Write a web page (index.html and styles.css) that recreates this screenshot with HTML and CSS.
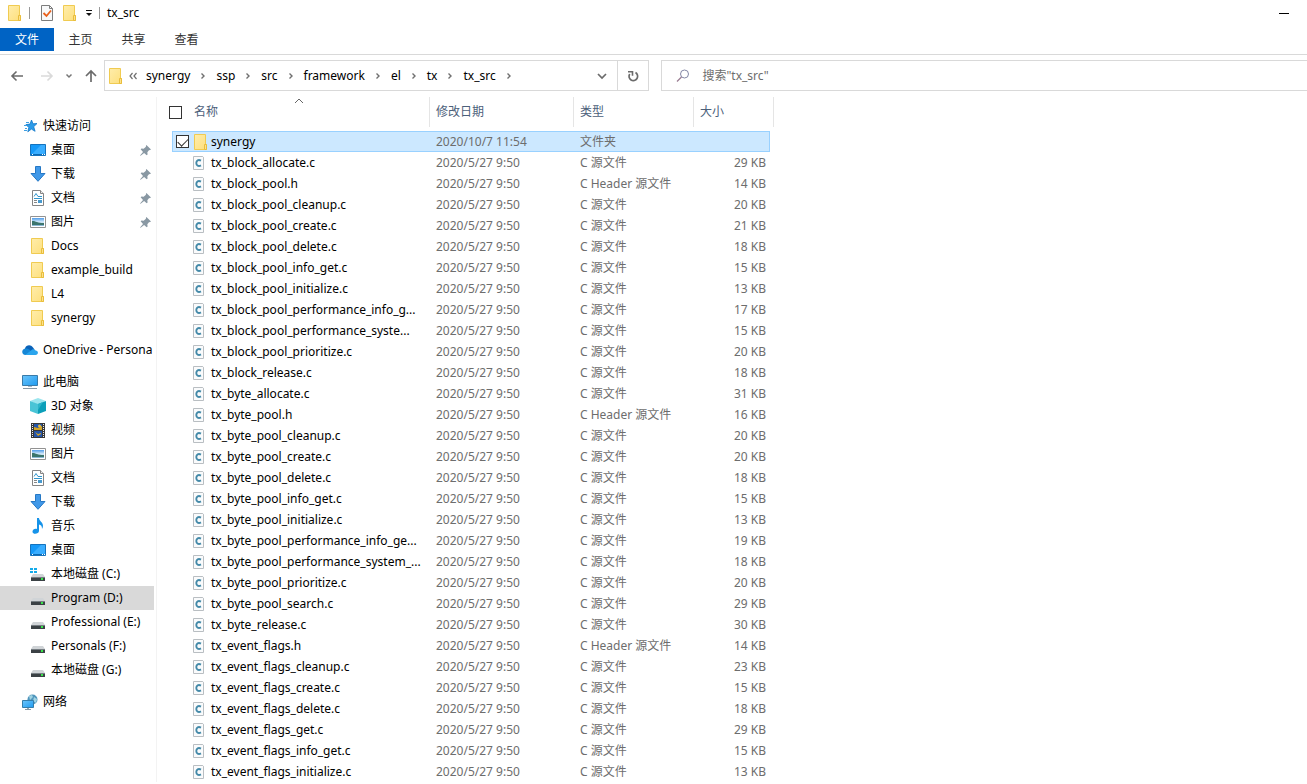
FILE: index.html
```
<!DOCTYPE html>
<html lang="zh-CN">
<head>
  <meta charset="utf-8">
  <title>tx_src</title>
  <link rel="stylesheet" href="styles.css">
</head>
<body>
  <!-- Icon definitions -->
  <svg class="defs" aria-hidden="true">
    <defs>
      <linearGradient id="g-screen" x1="0" y1="0" x2="1" y2="1">
        <stop offset="0" stop-color="#6cc5fb"/><stop offset="1" stop-color="#1f9bf0"/>
      </linearGradient>
      <linearGradient id="g-folder" x1="0" y1="0" x2="1" y2="1">
        <stop offset="0" stop-color="#ffedab"/><stop offset="1" stop-color="#fddf7c"/>
      </linearGradient>
      <linearGradient id="g-photo" x1="0" y1="0" x2="0" y2="1">
        <stop offset="0" stop-color="#4f9be8"/><stop offset=".5" stop-color="#d8ecfa"/><stop offset="1" stop-color="#7fb0cf"/>
      </linearGradient>
    </defs>
    <symbol id="folder" viewBox="0 0 16 16">
      <path d="M1.5.5h11v10h1v5h-12z" fill="url(#g-folder)" stroke="#f0cb51"/>
      <path d="M11.5 15.5v-5h2v5z" fill="#fde28a" stroke="#e9bd3c"/>
    </symbol>
    <symbol id="file-c" viewBox="0 0 16 16">
      <path d="M.5 1.500h10v13H.5z" fill="#fafbfc" stroke="#b9bec2"/>
      <path d="M9.500 1h1.500v1.500z" fill="#fff"/>
      <path d="M8 5.600C5.400 4.100 3.300 5.500 3.300 8s2.100 3.900 4.700 2.400" fill="none" stroke="#4389a8" stroke-width="1.900"/>
    </symbol>
    <symbol id="star" viewBox="0 0 16 16">
      <path d="M9.500 2l1.500 3.800 4-.3-3.300 3.200 1.400 4.600-3.700-2.200-3.600 2.700 1-4.300L4 6.600l4-.5z" fill="#2c9be8" stroke="#1177c9" stroke-width=".8"/>
      <path d="M4 4.500h3M2 7.500h3M3 10.500h2M2 12.500h3" stroke="#3d9fe3"/>
    </symbol>
    <symbol id="desktop" viewBox="0 0 16 16">
      <path d="M.5 2.500h15v11H.5z" fill="#1599f8" stroke="#1573bd"/>
      <path d="M2 12l9-9h4v9z" fill="#39adff"/>
      <path d="M1 12.500h14" stroke="#0a6bb5"/><path d="M2 12.500h1M12 12.500h1M14 12.500h1" stroke="#fff"/>
    </symbol>
    <symbol id="download" viewBox="0 0 16 16">
      <path d="M5.500.5h5v7h4.500L8 15.300 1 7.500h4.500z" fill="#4098e8" stroke="#2678c5"/>
    </symbol>
    <symbol id="document" viewBox="0 0 16 16">
      <path d="M2.500.5h8l3 3v12h-11z" fill="#fff" stroke="#858585"/>
      <path d="M10.500.5v3h3" fill="#eee" stroke="#858585"/>
      <path d="M4 6.500l2-3 2 3M8 6.500h4M4 8.500h8" fill="none" stroke="#3295cc"/>
      <path d="M4 10.500h3M4 12.500h3" stroke="#888"/><path d="M8 10h4v3H8z" fill="#479acf"/>
    </symbol>
    <symbol id="picture" viewBox="0 0 16 16">
      <path d="M.5 2.500h15v11H.5z" fill="#fff" stroke="#929292"/>
      <path d="M2 4h12v8H2z" fill="url(#g-photo)"/>
      <path d="M2 7c3-.5 5 2 12 2v2H2z" fill="#3c756d"/>
    </symbol>
    <symbol id="onedrive" viewBox="0 0 16 16">
      <path d="M3 6.500C4 3 8.500 2 11 5.500l1.500 2L9 11H2z" fill="#0a62b9"/>
      <path d="M3.500 13C-.8 13-.8 7 3.200 6.500c2-.3 3.300.5 4.800 1.500l3 4z" fill="#1687d6"/>
      <path d="M3 13l6-4.500c2-2.500 4.500-1 4.500 0C17 9 16.500 13 13.500 13z" fill="#2ba5ed"/>
    </symbol>
    <symbol id="pc" viewBox="0 0 16 16">
      <path d="M.5 1.500h15v10H.5z" fill="url(#g-screen)" stroke="#397ba9"/>
      <path d="M6 12h4v1H6z" fill="#a9b9c5"/><path d="M1 14.500h14" stroke="#8798a5"/>
    </symbol>
    <symbol id="cube" viewBox="0 0 16 16">
      <path d="M0 3l8-3 8 3-8 4z" fill="#9be5ee"/>
      <path d="M0 3l8 3v10l-8-3z" fill="#49c4d6"/>
      <path d="M16 3L8 6v10l8-3z" fill="#0b9fb9"/>
      <path d="M8 6l5-2-5 8z" fill="#2bb4ca"/>
    </symbol>
    <symbol id="video" viewBox="0 0 16 16">
      <path d="M1 1h14v15H1z" fill="#383838"/>
      <path d="M2.500 2v14M13.500 2v14" stroke="#eee" stroke-dasharray="1 1"/>
      <path d="M4 2h8v6H4zM4 9h8v6H4z" fill="#2455a9"/>
      <path d="M4 5l4 1 4-2v4H4zM5 10l3 2 3-1v1l-3 2z" fill="#d4a526"/>
      <circle cx="9.500" cy="4" r="1.500" fill="#e8be3b"/>
    </symbol>
    <symbol id="music" viewBox="0 0 16 16">
      <path d="M7 0h2c0 3 4 4 4 8 0 1-.4 2-1 3 0-3-1-4-3-4.500V13c0 3-6 4-6.500 1-.3-2.500 2.500-4 4.500-3z" fill="#1693e9"/>
    </symbol>
    <symbol id="drive" viewBox="0 0 16 16">
      <path d="M3 8h10l2 3H1z" fill="#d0d4d7"/>
      <path d="M1 11h14v4H1z" fill="#3b4145"/><path d="M1 11.500h14" stroke="#767d82"/>
      <path d="M11 13h2" stroke="#37e449" stroke-width="2"/>
    </symbol>
    <symbol id="drive-c" viewBox="0 0 16 16">
      <path d="M3 8h10l2 3H1z" fill="#d0d4d7"/>
      <path d="M1 11h14v4H1z" fill="#3b4145"/><path d="M1 11.500h14" stroke="#767d82"/>
      <path d="M11 13h2" stroke="#37e449" stroke-width="2"/>
      <path d="M0 2h3v2H0zM4 2h3v2H4zM0 5h3v2H0zM4 5h3v2H4z" fill="#13abea"/>
    </symbol>
    <symbol id="network" viewBox="0 0 16 16">
      <circle cx="10.500" cy="5.500" r="5" fill="#5096bd"/>
      <path d="M7 2l3-1 1 2-3 3zM12 3l3 2-1 4-3-2z" fill="#a0d3e2"/>
      <path d="M.5 6.500h11v7H.5z" fill="url(#g-screen)" stroke="#347eac"/>
      <path d="M5 14h2v1H5z" fill="#98a9b4"/><path d="M3 15.500h6" stroke="#8798a5"/>
    </symbol>
    <symbol id="pin" viewBox="0 0 12 12">
      <path d="M7 0l5 5-1.500.6L10 5.500 8 8l.3 2.300-1 1L4.500 8.700 1 11.500 0 12l.5-1L3.300 7.500.7 4.700l1-1L4 4l2.500-2L6.400 1z" fill="#8998a3"/>
    </symbol>
    <symbol id="chevron" viewBox="0 0 8 8">
      <path d="M2.500 1.500L5 4 2.500 6.500" fill="none" stroke="#6f6f6f" stroke-width="1.400"/>
    </symbol>
  </svg>

  <header class="title-bar">
    <svg class="icon"><use href="#folder"/></svg>
    <span class="divider"></span>
    <button class="quick-button properties" aria-label="属性">
      <svg class="icon" viewBox="0 0 16 16">
        <path d="M2.500.5h8l3 3v12h-11z" fill="#f8f9fa" stroke="#7d7d7d"/>
        <path d="M10.500.5v3h3" fill="none" stroke="#7d7d7d"/>
        <path d="M4.500 8l3 3 4.500-5.500" fill="none" stroke="#e9601b" stroke-width="1.800"/>
      </svg>
    </button>
    <button class="quick-button" aria-label="新建文件夹"><svg class="icon"><use href="#folder"/></svg></button>
    <button class="quick-button customize" aria-label="自定义快速访问工具栏">
      <svg width="8" height="8" viewBox="0 0 8 8"><path d="M1 1.500h6" stroke="#111"/><path d="M1 4h6L4 7z" fill="#111"/></svg>
    </button>
    <span class="divider"></span>
    <span class="title">tx_src</span>
    <button class="minimize" aria-label="最小化"></button>
  </header>

  <nav class="tabs">
    <button class="tab active">文件</button>
    <button class="tab">主页</button>
    <button class="tab">共享</button>
    <button class="tab">查看</button>
  </nav>

  <div class="toolbar">
    <div class="nav-buttons">
      <button aria-label="后退"><svg width="14" height="14" viewBox="0 0 14 14"><path d="M13 7H2M6.500 2.500L2 7l4.500 4.500" fill="none" stroke="#6b6b6b" stroke-width="1.600"/></svg></button>
      <button aria-label="前进"><svg width="14" height="14" viewBox="0 0 14 14"><path d="M1 7h11M7.500 2.500L12 7l-4.500 4.500" fill="none" stroke="#dadada" stroke-width="1.600"/></svg></button>
      <button class="recent" aria-label="最近位置"><svg width="8" height="8" viewBox="0 0 8 8"><path d="M1.500 2.500L4 5l2.500-2.500" fill="none" stroke="#777" stroke-width="1.500"/></svg></button>
      <button aria-label="上移"><svg width="14" height="14" viewBox="0 0 14 14"><path d="M7 13V2M2 7l5-5 5 5" fill="none" stroke="#6b6b6b" stroke-width="1.700"/></svg></button>
    </div>
    <div class="address">
      <svg class="icon"><use href="#folder"/></svg>
      <svg class="overflow" width="10" height="8" viewBox="0 0 10 8"><path d="M4.500 1L2 4l2.500 3M8.500 1L6 4l2.500 3" fill="none" stroke="#6f6f6f" stroke-width="1.200"/></svg>
      <a href="#">synergy</a><svg class="sep"><use href="#chevron"/></svg>
      <a href="#">ssp</a><svg class="sep"><use href="#chevron"/></svg>
      <a href="#">src</a><svg class="sep"><use href="#chevron"/></svg>
      <a href="#">framework</a><svg class="sep"><use href="#chevron"/></svg>
      <a href="#">el</a><svg class="sep"><use href="#chevron"/></svg>
      <a href="#">tx</a><svg class="sep"><use href="#chevron"/></svg>
      <a href="#">tx_src</a><svg class="sep"><use href="#chevron"/></svg>
      <button class="history" aria-label="以前的位置"><svg width="12" height="12" viewBox="0 0 12 12"><path d="M2 4l4 4 4-4" fill="none" stroke="#6b6b6b" stroke-width="1.700"/></svg></button>
      <button class="refresh" aria-label="刷新"><svg width="12" height="12" viewBox="0 0 12 12"><path d="M8.500 2.600A4.300 4.300 0 1 1 2.700 4" fill="none" stroke="#6b6b6b" stroke-width="1.700"/><path d="M1 1.800h4.500v4" fill="none" stroke="#6b6b6b" stroke-width="1.600"/></svg></button>
    </div>
    <div class="search">
      <svg width="14" height="14" viewBox="0 0 14 14"><circle cx="8.500" cy="5" r="4" fill="none" stroke="#8387a6"/><path d="M5.500 8L1 12.500" stroke="#9a7c92" stroke-width="1.200"/></svg>
      <input type="text" aria-label="搜索" placeholder='搜索"tx_src"'>
    </div>
  </div>

  <div class="content">
    <nav class="sidebar">
      <div class="group">
        <a class="root" href="#"><svg class="icon"><use href="#star"/></svg>快速访问</a>
        <a href="#"><svg class="icon"><use href="#desktop"/></svg>桌面<svg class="pin"><use href="#pin"/></svg></a>
        <a href="#"><svg class="icon"><use href="#download"/></svg>下载<svg class="pin"><use href="#pin"/></svg></a>
        <a href="#"><svg class="icon"><use href="#document"/></svg>文档<svg class="pin"><use href="#pin"/></svg></a>
        <a href="#"><svg class="icon"><use href="#picture"/></svg>图片<svg class="pin"><use href="#pin"/></svg></a>
        <a href="#"><svg class="icon"><use href="#folder"/></svg>Docs</a>
        <a href="#"><svg class="icon"><use href="#folder"/></svg>example_build</a>
        <a href="#"><svg class="icon"><use href="#folder"/></svg>L4</a>
        <a href="#"><svg class="icon"><use href="#folder"/></svg>synergy</a>
      </div>
      <div class="group">
        <a class="root" href="#"><svg class="icon"><use href="#onedrive"/></svg>OneDrive - Persona</a>
      </div>
      <div class="group">
        <a class="root" href="#"><svg class="icon"><use href="#pc"/></svg>此电脑</a>
        <a href="#"><svg class="icon"><use href="#cube"/></svg>3D 对象</a>
        <a href="#"><svg class="icon"><use href="#video"/></svg>视频</a>
        <a href="#"><svg class="icon"><use href="#picture"/></svg>图片</a>
        <a href="#"><svg class="icon"><use href="#document"/></svg>文档</a>
        <a href="#"><svg class="icon"><use href="#download"/></svg>下载</a>
        <a href="#"><svg class="icon"><use href="#music"/></svg>音乐</a>
        <a href="#"><svg class="icon"><use href="#desktop"/></svg>桌面</a>
        <a href="#"><svg class="icon"><use href="#drive-c"/></svg>本地磁盘 (C:)</a>
        <a class="current" href="#"><svg class="icon"><use href="#drive"/></svg>Program (D:)</a>
        <a href="#"><svg class="icon"><use href="#drive"/></svg>Professional (E:)</a>
        <a href="#"><svg class="icon"><use href="#drive"/></svg>Personals (F:)</a>
        <a href="#"><svg class="icon"><use href="#drive"/></svg>本地磁盘 (G:)</a>
      </div>
      <div class="group">
        <a class="root" href="#"><svg class="icon"><use href="#network"/></svg>网络</a>
      </div>
    </nav>

    <main>
      <table class="files">
        <colgroup>
          <col class="col-gutter"><col class="col-check"><col class="col-name"><col class="col-date"><col class="col-type"><col class="col-size"><col class="col-end">
        </colgroup>
        <thead>
          <tr>
            <th colspan="3" class="head-name">
              <svg class="sort" width="10" height="6" viewBox="0 0 10 6"><path d="M1 5l4-4 4 4" fill="none" stroke="#666"/></svg>
              <div class="cell"><input type="checkbox" aria-label="全选">名称</div>
            </th>
            <th>修改日期</th>
            <th>类型</th>
            <th colspan="2">大小</th>
          </tr>
        </thead>
        <tbody>
          <tr class="selected"><td></td><td class="check"><input type="checkbox" aria-label="synergy" checked></td><td class="name"><div class="cell"><svg class="icon"><use href="#folder"/></svg>synergy</div></td><td>2020/10/7 11:54</td><td>文件夹</td><td class="size"></td><td></td></tr>
          <tr><td></td><td></td><td class="name"><div class="cell"><svg class="icon"><use href="#file-c"/></svg>tx_block_allocate.c</div></td><td>2020/5/27 9:50</td><td>C 源文件</td><td class="size">29 KB</td><td></td></tr>
          <tr><td></td><td></td><td class="name"><div class="cell"><svg class="icon"><use href="#file-c"/></svg>tx_block_pool.h</div></td><td>2020/5/27 9:50</td><td>C Header 源文件</td><td class="size">14 KB</td><td></td></tr>
          <tr><td></td><td></td><td class="name"><div class="cell"><svg class="icon"><use href="#file-c"/></svg>tx_block_pool_cleanup.c</div></td><td>2020/5/27 9:50</td><td>C 源文件</td><td class="size">20 KB</td><td></td></tr>
          <tr><td></td><td></td><td class="name"><div class="cell"><svg class="icon"><use href="#file-c"/></svg>tx_block_pool_create.c</div></td><td>2020/5/27 9:50</td><td>C 源文件</td><td class="size">21 KB</td><td></td></tr>
          <tr><td></td><td></td><td class="name"><div class="cell"><svg class="icon"><use href="#file-c"/></svg>tx_block_pool_delete.c</div></td><td>2020/5/27 9:50</td><td>C 源文件</td><td class="size">18 KB</td><td></td></tr>
          <tr><td></td><td></td><td class="name"><div class="cell"><svg class="icon"><use href="#file-c"/></svg>tx_block_pool_info_get.c</div></td><td>2020/5/27 9:50</td><td>C 源文件</td><td class="size">15 KB</td><td></td></tr>
          <tr><td></td><td></td><td class="name"><div class="cell"><svg class="icon"><use href="#file-c"/></svg>tx_block_pool_initialize.c</div></td><td>2020/5/27 9:50</td><td>C 源文件</td><td class="size">13 KB</td><td></td></tr>
          <tr><td></td><td></td><td class="name"><div class="cell"><svg class="icon"><use href="#file-c"/></svg>tx_block_pool_performance_info_g...</div></td><td>2020/5/27 9:50</td><td>C 源文件</td><td class="size">17 KB</td><td></td></tr>
          <tr><td></td><td></td><td class="name"><div class="cell"><svg class="icon"><use href="#file-c"/></svg>tx_block_pool_performance_syste...</div></td><td>2020/5/27 9:50</td><td>C 源文件</td><td class="size">15 KB</td><td></td></tr>
          <tr><td></td><td></td><td class="name"><div class="cell"><svg class="icon"><use href="#file-c"/></svg>tx_block_pool_prioritize.c</div></td><td>2020/5/27 9:50</td><td>C 源文件</td><td class="size">20 KB</td><td></td></tr>
          <tr><td></td><td></td><td class="name"><div class="cell"><svg class="icon"><use href="#file-c"/></svg>tx_block_release.c</div></td><td>2020/5/27 9:50</td><td>C 源文件</td><td class="size">18 KB</td><td></td></tr>
          <tr><td></td><td></td><td class="name"><div class="cell"><svg class="icon"><use href="#file-c"/></svg>tx_byte_allocate.c</div></td><td>2020/5/27 9:50</td><td>C 源文件</td><td class="size">31 KB</td><td></td></tr>
          <tr><td></td><td></td><td class="name"><div class="cell"><svg class="icon"><use href="#file-c"/></svg>tx_byte_pool.h</div></td><td>2020/5/27 9:50</td><td>C Header 源文件</td><td class="size">16 KB</td><td></td></tr>
          <tr><td></td><td></td><td class="name"><div class="cell"><svg class="icon"><use href="#file-c"/></svg>tx_byte_pool_cleanup.c</div></td><td>2020/5/27 9:50</td><td>C 源文件</td><td class="size">20 KB</td><td></td></tr>
          <tr><td></td><td></td><td class="name"><div class="cell"><svg class="icon"><use href="#file-c"/></svg>tx_byte_pool_create.c</div></td><td>2020/5/27 9:50</td><td>C 源文件</td><td class="size">20 KB</td><td></td></tr>
          <tr><td></td><td></td><td class="name"><div class="cell"><svg class="icon"><use href="#file-c"/></svg>tx_byte_pool_delete.c</div></td><td>2020/5/27 9:50</td><td>C 源文件</td><td class="size">18 KB</td><td></td></tr>
          <tr><td></td><td></td><td class="name"><div class="cell"><svg class="icon"><use href="#file-c"/></svg>tx_byte_pool_info_get.c</div></td><td>2020/5/27 9:50</td><td>C 源文件</td><td class="size">15 KB</td><td></td></tr>
          <tr><td></td><td></td><td class="name"><div class="cell"><svg class="icon"><use href="#file-c"/></svg>tx_byte_pool_initialize.c</div></td><td>2020/5/27 9:50</td><td>C 源文件</td><td class="size">13 KB</td><td></td></tr>
          <tr><td></td><td></td><td class="name"><div class="cell"><svg class="icon"><use href="#file-c"/></svg>tx_byte_pool_performance_info_ge...</div></td><td>2020/5/27 9:50</td><td>C 源文件</td><td class="size">19 KB</td><td></td></tr>
          <tr><td></td><td></td><td class="name"><div class="cell"><svg class="icon"><use href="#file-c"/></svg>tx_byte_pool_performance_system_...</div></td><td>2020/5/27 9:50</td><td>C 源文件</td><td class="size">18 KB</td><td></td></tr>
          <tr><td></td><td></td><td class="name"><div class="cell"><svg class="icon"><use href="#file-c"/></svg>tx_byte_pool_prioritize.c</div></td><td>2020/5/27 9:50</td><td>C 源文件</td><td class="size">20 KB</td><td></td></tr>
          <tr><td></td><td></td><td class="name"><div class="cell"><svg class="icon"><use href="#file-c"/></svg>tx_byte_pool_search.c</div></td><td>2020/5/27 9:50</td><td>C 源文件</td><td class="size">29 KB</td><td></td></tr>
          <tr><td></td><td></td><td class="name"><div class="cell"><svg class="icon"><use href="#file-c"/></svg>tx_byte_release.c</div></td><td>2020/5/27 9:50</td><td>C 源文件</td><td class="size">30 KB</td><td></td></tr>
          <tr><td></td><td></td><td class="name"><div class="cell"><svg class="icon"><use href="#file-c"/></svg>tx_event_flags.h</div></td><td>2020/5/27 9:50</td><td>C Header 源文件</td><td class="size">14 KB</td><td></td></tr>
          <tr><td></td><td></td><td class="name"><div class="cell"><svg class="icon"><use href="#file-c"/></svg>tx_event_flags_cleanup.c</div></td><td>2020/5/27 9:50</td><td>C 源文件</td><td class="size">23 KB</td><td></td></tr>
          <tr><td></td><td></td><td class="name"><div class="cell"><svg class="icon"><use href="#file-c"/></svg>tx_event_flags_create.c</div></td><td>2020/5/27 9:50</td><td>C 源文件</td><td class="size">15 KB</td><td></td></tr>
          <tr><td></td><td></td><td class="name"><div class="cell"><svg class="icon"><use href="#file-c"/></svg>tx_event_flags_delete.c</div></td><td>2020/5/27 9:50</td><td>C 源文件</td><td class="size">18 KB</td><td></td></tr>
          <tr><td></td><td></td><td class="name"><div class="cell"><svg class="icon"><use href="#file-c"/></svg>tx_event_flags_get.c</div></td><td>2020/5/27 9:50</td><td>C 源文件</td><td class="size">29 KB</td><td></td></tr>
          <tr><td></td><td></td><td class="name"><div class="cell"><svg class="icon"><use href="#file-c"/></svg>tx_event_flags_info_get.c</div></td><td>2020/5/27 9:50</td><td>C 源文件</td><td class="size">15 KB</td><td></td></tr>
          <tr><td></td><td></td><td class="name"><div class="cell"><svg class="icon"><use href="#file-c"/></svg>tx_event_flags_initialize.c</div></td><td>2020/5/27 9:50</td><td>C 源文件</td><td class="size">13 KB</td><td></td></tr>
        </tbody>
      </table>
    </main>
  </div>
</body>
</html>
```
FILE: styles.css
```
* {
  box-sizing: border-box;
}
body {
  font-family: "Noto Sans", "Noto Sans CJK SC", sans-serif;
  font-size: 12px;
  line-height: 16px;
  color: #000;
  background-color: #fff;
  margin: 0;
}
button, input {
  font: inherit;
  margin: 0;
}
button {
  display: flex;
  align-items: center;
  justify-content: center;
  padding: 0;
  border: none;
  background: none;
  color: inherit;
}
a {
  color: inherit;
  text-decoration: none;
}
svg {
  flex: none;
}
.defs {
  position: absolute;
  width: 0;
  height: 0;
}
.icon {
  width: 16px;
  height: 16px;
}

/* Title bar */
.title-bar {
  display: flex;
  align-items: center;
  height: 28px;
  padding: 0 18px 2px 7px;
}
.divider {
  width: 1px;
  height: 12px;
  margin: 0 7px 0 6px;
  background-color: #999;
}
.quick-button {
  margin-right: 7px;
}
.properties {
  margin-left: 2px;
}
.customize {
  margin: 0;
}
.minimize {
  width: 10px;
  height: 1px;
  margin-left: auto;
  background-color: #000;
}

/* Ribbon tabs */
.tabs {
  display: flex;
  height: 27px;
  padding-bottom: 3px;
  border-bottom: 1px solid #d9d9d9;
}
.tab {
  width: 53px;
  color: #333;
}
.tab.active {
  width: 54px;
  background-color: #0063c4;
  color: #fff;
}

/* Address row */
.toolbar {
  display: flex;
  padding-top: 5px;
}
.nav-buttons {
  display: flex;
  align-items: center;
  gap: 16px;
  width: 104px;
  padding-left: 10px;
}
.nav-buttons .recent {
  margin: 0 -5px;
}
.address {
  display: flex;
  align-items: center;
  flex: 6;
  height: 31px;
  border: 1px solid #d9d9d9;
  padding-left: 3px;
}
.overflow {
  margin: 0 8px 0 4px;
}
.sep {
  width: 8px;
  height: 8px;
  margin: 0 9px;
}
.history {
  width: 30px;
  height: 29px;
  margin-left: auto;
}
.refresh {
  width: 31px;
  height: 29px;
  border-left: 1px solid #d9d9d9;
}
.search {
  display: flex;
  align-items: center;
  gap: 12px;
  flex: 7;
  height: 31px;
  margin-left: 12px;
  padding-left: 14px;
  border: 1px solid #d9d9d9;
  border-right: none;
}
.search input {
  flex: 1;
  padding: 0;
  border: none;
  outline: none;
}
.search input::placeholder {
  color: #6d6d6d;
}

/* Navigation pane */
.content {
  display: flex;
  padding-top: 6px;
}
.sidebar {
  width: 157px;
  padding: 17px 2px 0 0;
  border-right: 1px solid #f3f3f3;
}
.group {
  margin-bottom: 8px;
}
.sidebar a {
  display: flex;
  align-items: center;
  gap: 5px;
  height: 24px;
  padding-left: 30px;
  white-space: nowrap;
}
.sidebar .root {
  padding-left: 22px;
}
.sidebar .current {
  background-color: #d9d9d9;
}
.pin {
  width: 11px;
  height: 11px;
  margin: 0 3px 0 auto;
}

/* File list */
main {
  flex: 1;
  padding-left: 9px;
}
.files {
  width: 608px;
  table-layout: fixed;
  border-spacing: 0;
}
.col-gutter {
  width: 6px;
}
.col-check {
  width: 21px;
}
.col-name {
  width: 237px;
}
.col-date {
  width: 144px;
}
.col-type {
  width: 120px;
}
.col-size {
  width: 76px;
}
.col-end {
  width: 4px;
}
.files th {
  position: relative;
  height: 30px;
  padding: 0 0 0 6px;
  border-right: 1px solid #e5e5e5;
  color: #4c607a;
  font-weight: normal;
  text-align: left;
}
.files .head-name {
  padding-left: 3px;
}
.head-name .cell {
  gap: 12px;
}
.sort {
  position: absolute;
  top: 1px;
  left: 128px;
}
.files tbody::before {
  content: "";
  display: block;
  height: 4px;
}
.files td {
  height: 21px;
  padding: 0 0 0 6px;
  color: #6d6d6d;
  white-space: nowrap;
}
.files td:empty, .files .check {
  padding: 0;
}
.files .name {
  padding: 0;
  color: #000;
}
.cell {
  display: flex;
  align-items: center;
  gap: 2px;
}
.files .size {
  padding: 0 4px 0 0;
  text-align: right;
}
.selected td:not(:first-child):not(:last-child) {
  background-color: #cce8ff;
  border-top: 1px solid #99d1ff;
  border-bottom: 1px solid #99d1ff;
}
.selected .check {
  border-left: 1px solid #99d1ff;
}
.selected .size {
  border-right: 1px solid #99d1ff;
}
input[type="checkbox"] {
  appearance: none;
  display: block;
  width: 13px;
  height: 13px;
  border: 1px solid #333;
  background-color: #fff;
}
.check input {
  margin-left: 3px;
}
input[type="checkbox"]:checked::before {
  content: "";
  display: block;
  width: 9px;
  height: 5px;
  margin: 2px 0 0 1px;
  border-left: 1px solid #333;
  border-bottom: 1px solid #333;
  transform: rotate(-45deg);
}
```
